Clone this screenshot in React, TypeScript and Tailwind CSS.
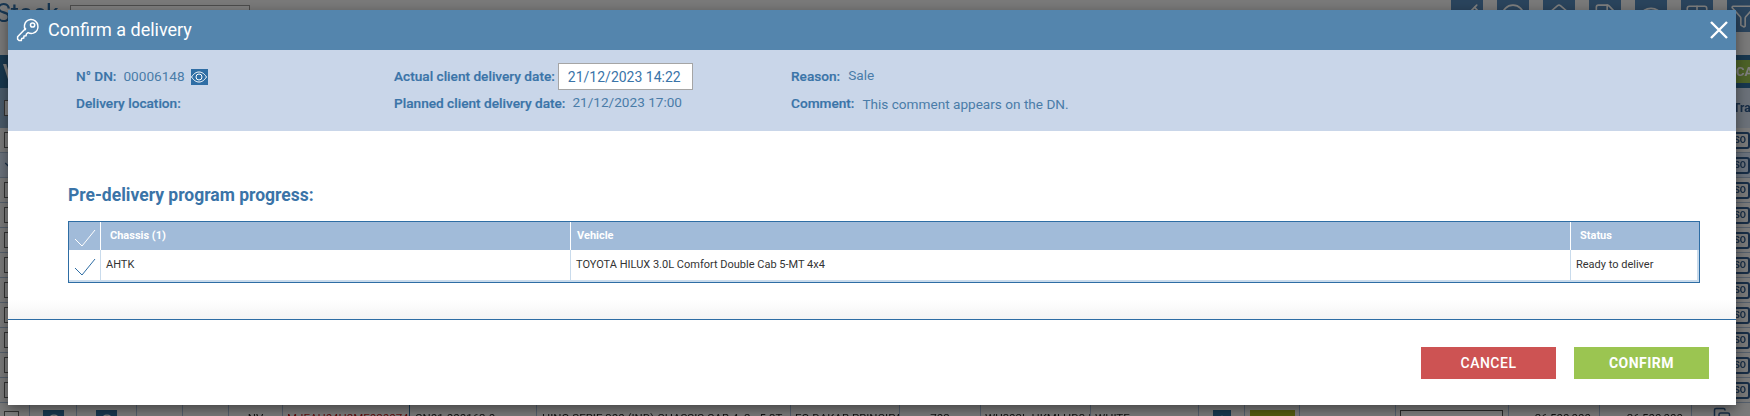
import { Key, Circle, Home, FileText, Eye, Table, Filter, ChevronDown, ChevronsUpDown, Clock, DollarSign, Copy } from 'lucide-react';

const toolbarIcons = [Key, Circle, Home, FileText, Eye, Table, Filter];
const rowOffsets = Array.from({ length: 11 }, (_, i) => i);

function IconSquare({ children }: { children: React.ReactNode }) {
  return <div className="flex h-[22px] w-[21px] items-center justify-center bg-[#2e6f9e] text-white">{children}</div>;
}

function SoIcon() {
  return (
    <div className="ml-auto mr-[-6px] flex h-[17px] w-[20px] items-center justify-center rounded-[3px] border-2 border-[#2e5a8c] text-[9px] font-bold leading-none text-[#2e5a8c]">
      SO
    </div>
  );
}

function BottomRow() {
  const cell = 'h-full shrink-0 overflow-hidden whitespace-nowrap border-r border-[#a8bfd8] pt-[7px]';
  return (
    <div className="flex h-[25px] text-[11.5px] text-[#222]">
      <div className={`${cell} w-[30px] pl-[4px] pt-[8px]`}>
        <div className="h-[16px] w-[15px] border border-[#666] bg-white" />
      </div>
      <div className={`${cell} w-[47px] pl-[13px] pt-[5px]`}>
        <IconSquare><Circle size={14} /></IconSquare>
      </div>
      <div className={`${cell} w-[60px] pl-[19px] pt-[5px]`}>
        <IconSquare><Clock size={14} /></IconSquare>
      </div>
      <div className={`${cell} w-[46px]`} />
      <div className={`${cell} w-[46px]`} />
      <div className={`${cell} w-[54px] text-center`}>NV</div>
      <div className={`${cell} w-[127px] border-r-[#2e6f9e] pl-[4px] text-[#c01818]`}>MJEAH04H2ME020074</div>
      <div className={`${cell} w-[127px] pl-[5px]`}>CN01-000162-0</div>
      <div className={`${cell} w-[254px] pl-[5px]`}>HINO SERIE 300 (IND) CHASSIS CAB 4x2 - 5.3T - 11</div>
      <div className={`${cell} w-[109px] pl-[4px]`}>EQ DAKAR PRINCIPAL</div>
      <div className={`${cell} w-[81px] text-center`}>702</div>
      <div className={`${cell} w-[110px] pl-[4px]`}>WU302L-HKMLHD3 |</div>
      <div className={`${cell} w-[108px] pl-[4px]`}>WHITE</div>
      <div className={`${cell} w-[46px] pl-[14px] pt-[4px]`}>
        <div className="flex h-[21px] w-[18px] items-center justify-center bg-[#2e6f9e] text-white"><DollarSign size={12} /></div>
      </div>
      <div className={`${cell} w-[55px] pl-[5px] pt-[3px]`}>
        <div className="h-[22px] w-[45px] bg-[#a8b820] pt-[3px] text-center font-bold text-white">STD</div>
      </div>
      <div className={`${cell} w-[96px]`} />
      <div className={`${cell} w-[113px] pl-[4px] pt-[4px]`}>
        <div className="flex h-[21px] w-[103px] items-center justify-between border border-[#555] bg-white px-[6px]">
          <span>STD. TTC</span>
          <ChevronsUpDown size={10} />
        </div>
      </div>
      <div className={`${cell} w-[91px] pr-[8px] text-right`}>26,500,000</div>
      <div className={`${cell} w-[92px] pr-[8px] text-right`}>26,500,000</div>
      <div className="h-full flex-1 pl-[21px] pt-[4px] text-[#2e5a8c]"><Copy size={18} /></div>
    </div>
  );
}

function Background() {
  return (
    <div className="h-[416px] w-[1750px] overflow-hidden bg-[#f5f5f5] blur-[0.4px]">
      <div className="flex h-[55px] items-start justify-between">
        <div className="flex items-start">
          <div className="w-[70px]">
            <span className="ml-[-4px] mt-[-6px] block text-[25px] leading-[40px] text-[#2e6da4]">Stock</span>
          </div>
          <div className="mt-[5px] h-[30px] w-[180px] border border-[#999] bg-white" />
        </div>
        <div className="mr-[-9px] flex gap-[14px]">
          {toolbarIcons.map((Icon, i) => (
            <div key={i} className="flex h-[32px] w-[32px] items-center justify-center bg-[#5489ba] text-white">
              <Icon size={26} strokeWidth={1.5} />
            </div>
          ))}
        </div>
      </div>
      <div className="flex h-[33px] items-center justify-between bg-[#2e6f9e] pl-[3px] text-[20px] font-bold text-white">
        <span>V</span>
        <div className="flex h-[23px] w-[14px] items-center overflow-hidden bg-[#9bc551] text-[13px] font-bold">CANCEL</div>
      </div>
      <div className="flex h-[40px] items-center justify-between bg-[#d6e2f2] text-[12px] font-bold text-[#2e5a8c]">
        <div className="flex h-full w-[30px] items-center bg-[#92b5d5] pl-1">
          <div className="h-[16px] w-[14px] border border-[#666] bg-white" />
        </div>
        <span className="w-[17px] overflow-hidden whitespace-nowrap">Tran</span>
      </div>
      {rowOffsets.map((i) => (
        <div
          key={i}
          className={`flex h-[25px] items-center border-b border-[#a8bfd8] pl-1 pr-[6px] ${i === 1 ? 'bg-[#d6e4f8]' : ''}`}
        >
          {i === 1 ? (
            <ChevronDown size={14} className="ml-[-2px] text-[#2e5a8c]" />
          ) : (
            <div className="h-[16px] w-[14px] border border-[#666] bg-white" />
          )}
          <SoIcon />
        </div>
      ))}
      <BottomRow />
    </div>
  );
}

function KeyIcon() {
  return (
    <svg width="24" height="24" viewBox="0 0 24 24" fill="none" stroke="white" strokeWidth="1.5" strokeLinejoin="round" strokeLinecap="round">
      <path d="M9.6 10.6 1.6 18.8v2.4l1.4 1.3h2.3l.4-2.1 2-.3.3-2 2-.3.4-1.8 1.7-1.4a7.2 7.2 0 0 0 5.2.5 6.8 6.8 0 0 0 4.6-7.4 6.9 6.9 0 0 0-7.4-6.1 7 7 0 0 0-6 5.6 7 7 0 0 0 .7 4.4Z" />
      <circle cx="16.6" cy="7" r="2.1" />
    </svg>
  );
}

function EyeBadge() {
  return (
    <span className="ml-[6px] flex h-[16px] w-[17px] items-center justify-center bg-[#2f6ea5]">
      <svg width="16" height="12" viewBox="0 0 16 12" fill="none" stroke="white" strokeWidth="1">
        <path d="M.5 6C3 2.2 5.5 1 8 1s5 1.2 7.5 5C13 9.8 10.5 11 8 11S3 9.8.5 6Z" />
        <circle cx="8" cy="6" r="3" />
      </svg>
    </span>
  );
}

function Tick({ stroke }: { stroke: string }) {
  return (
    <svg width="22" height="18" viewBox="0 0 22 18" fill="none" stroke={stroke} strokeWidth="1">
      <path d="M1 10l7 7L21 1" />
    </svg>
  );
}

function InfoLabel({ children }: { children: React.ReactNode }) {
  return <span className="text-[13.65px] font-medium text-[#3a74a8] [-webkit-text-stroke:0.2px_#3a74a8]">{children}</span>;
}

function InfoValue({ children }: { children: React.ReactNode }) {
  return <span className="text-[13.6px] text-[#4a7ca8]">{children}</span>;
}

function DeliveryTable() {
  return (
    <div className="border border-[#2e6da4] text-[11px]">
      <div className="flex h-[28px] bg-[#a1bbd9] font-bold text-white">
        <div className="flex w-[32px] items-center justify-center border-r border-white pt-[3px]">
          <Tick stroke="white" />
        </div>
        <div className="flex w-[470px] items-center border-r border-white pl-[9px]">Chassis (1)</div>
        <div className="flex w-[1000px] items-center border-r border-white pl-[6px]">Vehicle</div>
        <div className="flex flex-1 items-center pl-[9px]">Status</div>
      </div>
      <div className="flex h-[32px] border-b-2 border-r-2 border-b-[#c9dbec] border-r-[#c9dbec] text-[#333]">
        <div className="flex w-[32px] items-center justify-center border-r border-[#c9dbec] pt-[3px]">
          <Tick stroke="#2e6da4" />
        </div>
        <div className="flex w-[470px] items-center border-r border-[#c9dbec] pl-[5px]">AHTK</div>
        <div className="flex w-[1000px] items-center border-r border-[#c9dbec] pl-[5px]">
          TOYOTA HILUX 3.0L Comfort Double Cab 5-MT 4x4
        </div>
        <div className="flex flex-1 items-center pl-[5px]">Ready to deliver</div>
      </div>
    </div>
  );
}

function ConfirmDialog() {
  return (
    <div className="absolute left-[8px] top-[10px] flex h-[395px] w-[1728px] flex-col bg-white shadow-[0_4px_12px_rgba(0,0,0,0.45)]">
      <div className="flex h-[40px] shrink-0 items-center justify-between bg-[#5485ad] pl-[8px] pr-[8px]">
        <div className="flex items-center gap-[8px]">
          <KeyIcon />
          <span className="text-[18px] leading-none text-white">Confirm a delivery</span>
        </div>
        <svg width="18" height="18" viewBox="0 0 18 18" stroke="white" strokeWidth="2.4">
          <path d="M1 1l16 16M17 1 1 17" />
        </svg>
      </div>

      <div className="flex h-[81px] shrink-0 bg-[#c9d6e9] pl-[68px] pt-[13px]">
        <div className="w-[318px]">
          <div className="flex h-[27px] items-center">
            <InfoLabel>N° DN:</InfoLabel>
            <span className="ml-[7px] mt-[-1px]"><InfoValue>00006148</InfoValue></span>
            <EyeBadge />
          </div>
          <div className="flex h-[27px] items-center">
            <InfoLabel>Delivery location:</InfoLabel>
          </div>
        </div>
        <div className="w-[397px]">
          <div className="flex h-[27px] items-center">
            <InfoLabel>Actual client delivery date:</InfoLabel>
            <input
              readOnly
              value="21/12/2023 14:22"
              className="ml-[3px] h-[27px] w-[135px] border border-[#a5a5a5] bg-white pl-[9px] text-[14px] text-[#3a74a8] outline-none"
            />
          </div>
          <div className="flex h-[27px] items-center">
            <InfoLabel>Planned client delivery date:</InfoLabel>
            <span className="ml-[7px] mt-[-4px]"><InfoValue>21/12/2023 17:00</InfoValue></span>
          </div>
        </div>
        <div>
          <div className="flex h-[27px] items-center">
            <InfoLabel>Reason:</InfoLabel>
            <span className="ml-[8px] mt-[-3px]"><InfoValue>Sale</InfoValue></span>
          </div>
          <div className="flex h-[27px] items-center">
            <InfoLabel>Comment:</InfoLabel>
            <span className="ml-[8px]"><InfoValue>This comment appears on the DN.</InfoValue></span>
          </div>
        </div>
      </div>

      <div className="h-[188px] shrink-0 bg-[linear-gradient(to_bottom,#fff_90%,#f4f4f4)] pl-[60px] pr-[36px] pt-[53px]">
        <h2 className="mb-[15px] text-[17.5px] font-bold leading-[22px] text-[#3a74a8]">Pre-delivery program progress:</h2>
        <DeliveryTable />
      </div>

      <div className="flex flex-1 justify-end gap-[18px] border-t border-[#2e6da4] pr-[27px] pt-[27px]">
        <button className="h-[32px] w-[135px] bg-[#cd5353] text-[14px] font-medium tracking-[0.5px] text-white">CANCEL</button>
        <button className="h-[32px] w-[135px] bg-[#9bc551] text-[14px] font-bold tracking-[0.5px] text-white">CONFIRM</button>
      </div>
    </div>
  );
}

export default function App() {
  return (
    <div className="relative h-[416px] w-[1750px] overflow-hidden font-['Roboto',sans-serif]">
      <Background />
      <div className="absolute inset-0 bg-black/50" />
      <ConfirmDialog />
    </div>
  );
}
